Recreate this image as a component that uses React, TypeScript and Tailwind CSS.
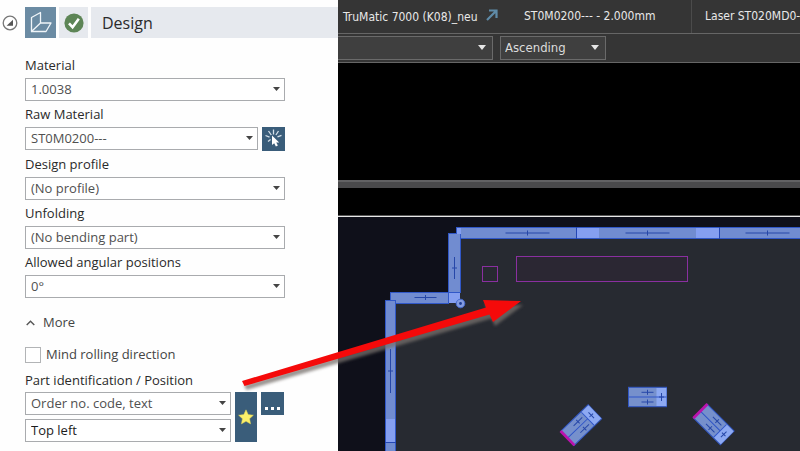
import type { ReactNode } from 'react';

const openSans = "font-['Open_Sans','Noto_Sans',sans-serif]";
const tahoma = "font-['DejaVu_Sans_Condensed','DejaVu_Sans',sans-serif]";

type PickerProps = {
  id: string;
  label?: string;
  value: string;
  strong?: boolean;
  ariaLabel?: string;
};

function Picker({ id, value, strong, ariaLabel }: PickerProps) {
  return (
    <div className="relative min-w-0 flex-1">
      <select
        id={id}
        aria-label={ariaLabel}
        className={`block h-[23px] w-full appearance-none rounded-none border border-[#a9abae] bg-white pb-0.5 pl-[5px] pr-5 text-[13px] leading-[20px] outline-none ${
          strong ? 'text-[#1c1c1c]' : 'text-[#505050]'
        }`}
      >
        <option>{value}</option>
      </select>
      <svg className="pointer-events-none absolute right-[5px] top-[9px] h-1 w-[7px]" viewBox="0 0 7 4" aria-hidden="true">
        <path d="M0 0h7L3.5 4z" fill="#444" />
      </svg>
    </div>
  );
}

function Field({ id, label, value, children }: PickerProps & { children?: ReactNode }) {
  return (
    <div>
      <label htmlFor={id} className="block h-[26px] text-[13px] leading-[26px] text-[#2a2a2a]">
        {label}
      </label>
      <div className="flex gap-1">
        <Picker id={id} value={value} />
        {children}
      </div>
    </div>
  );
}

function DesignPanel() {
  return (
    <aside className={`w-[338px] shrink-0 bg-[#fefefe] pt-[7px] ${openSans}`}>
      <header className="flex h-[31px] items-center">
        <button type="button" aria-label="Collapse" className="flex w-[25px] justify-start pl-0.5">
          <svg width="16" height="16" viewBox="0 0 16 16">
            <circle cx="8" cy="8" r="6.8" fill="#fff" stroke="#777" strokeWidth="1.3" />
            <path d="M11 4.8v6H4.6z" fill="#555" />
          </svg>
        </button>
        <button type="button" aria-label="Design view" className="flex h-[31px] w-[31px] items-center justify-center bg-[#6b8ba3]">
          <svg width="31" height="31" viewBox="0 0 31 31" fill="none" stroke="#f0f5f9" strokeWidth="1.3" strokeLinejoin="round">
            <path d="M6.5 10.5 15.5 5.500V16L6.500 24.500z" />
            <path d="M15.5 16H26L21 24.500H6.500" />
          </svg>
        </button>
        <div className="ml-[3px] flex h-[31px] w-[29px] items-center justify-center bg-[#e6e9ee]">
          <svg width="20" height="20" viewBox="0 0 20 20" role="img" aria-label="Valid">
            <circle cx="10" cy="10" r="9.6" fill="#5d8556" />
            <path d="m5 10.3 3.6 3.9 6.2-8.4" fill="none" stroke="#fff" strokeWidth="2.6" />
          </svg>
        </div>
        <h1 className="ml-[3px] flex h-[31px] flex-1 items-center bg-[#e6e9ee] pl-[11px] text-[16px] text-[#2b2b2b]">Design</h1>
      </header>

      <form className="pl-[25px] pt-[14px]">
        <div className="w-[260px]">
          <Field id="material" label="Material" value="1.0038" />
          <Field id="raw" label="Raw Material" value="ST0M0200---">
            <button type="button" aria-label="Pick raw material" className="h-6 w-[23px] bg-[#3a5d7a]">
              <svg width="23" height="24" viewBox="0 0 23 24" aria-hidden="true">
                <path
                  d="M11.5 2.5v5M6.5 4l2.8 4M16.5 4l-2.6 4M3.5 8.5l4 1.6M19.5 8.3l-4 1.6M6 14.5l2.6-2"
                  stroke="#d5e0e9"
                  strokeWidth="1.3"
                />
                <path d="M10 8.500v9.600l2.200-1.900 1.700 3.400 2-1-1.700-3.200h3z" fill="#fff" />
              </svg>
            </button>
          </Field>
          <Field id="profile" label="Design profile" value="(No profile)" />
          <Field id="unfolding" label="Unfolding" value="(No bending part)" />
          <Field id="angles" label="Allowed angular positions" value="0°" />
        </div>

        <button type="button" className="mt-[15px] flex h-5 items-center gap-2 text-[13px] text-[#444]">
          <svg width="9" height="6" viewBox="0 0 9 6" fill="none" stroke="#555" strokeWidth="1.4" className="ml-px">
            <path d="M.7 5 4.5 1.2 8.3 5" />
          </svg>
          More
        </button>

        <label className="mt-3 flex h-5 items-center gap-[5px] text-[13px] text-[#444]">
          <input type="checkbox" className="h-4 w-4 appearance-none border border-[#b2b4b6] bg-white" />
          Mind rolling direction
        </label>

        <label htmlFor="ident" className="mt-1 block h-[23px] text-[13px] leading-[23px] text-[#2a2a2a]">
          Part identification / Position
        </label>
        <div className="flex items-start gap-1">
          <div className="flex w-[206px] flex-col gap-1">
            <Picker id="ident" value="Order no. code, text" />
            <Picker id="position" value="Top left" ariaLabel="Position" strong />
          </div>
          <button type="button" aria-label="Favourite" className="flex h-[50px] w-[22px] items-center justify-center bg-[#3a5d7a]">
            <svg width="16" height="16" viewBox="0 0 16 16">
              <path d="m8 .8 2.200 4.800 5.200.6-3.800 3.500 1 5.200L8 12.300l-4.600 2.600 1-5.200L.6 6.200l5.200-.6z" fill="#fbf06a" stroke="#d9cf57" strokeWidth=".5" />
            </svg>
          </button>
          <button type="button" aria-label="More options" className="flex h-[23px] w-[23px] items-end justify-center gap-[3px] bg-[#3a5d7a] pb-[5px]">
            <span className="h-[3px] w-[3px] bg-white" />
            <span className="h-[3px] w-[3px] bg-white" />
            <span className="h-[3px] w-[3px] bg-white" />
          </button>
        </div>
      </form>
    </aside>
  );
}

function Bend({ x, y, half = 22, vertical = false }: { x: number; y: number; half?: number; vertical?: boolean }) {
  return (
    <path
      d={`M${-half} 0H${half}M0 -2.5V2.5`}
      transform={`translate(${x} ${y})${vertical ? ' rotate(90)' : ''}`}
      stroke="#2647a8"
      strokeWidth="1"
    />
  );
}

function Tab({ x, y, angle, edge }: { x: number; y: number; angle: number; edge?: boolean }) {
  return (
    <g transform={`translate(${x} ${y}) rotate(${angle})`}>
      <rect x="-19" y="-9.7" width="38" height="19.4" fill="#7690cc" stroke="#3157c4" />
      <rect x="9" y="-9" width="10" height="18" fill="#8da9f2" />
      <path d={edge ? 'M-19 0H9M9 -9V9' : 'M-19 0H19'} stroke="#2f55c8" />
      <Bend x={0} y={-4.7} half={6} />
      <Bend x={0} y={5} half={6} />
      <Bend x={14} y={0} half={4} vertical />
      {edge && <path d="M-19 -10V10" stroke="#bb12ad" strokeWidth="2.8" />}
    </g>
  );
}

function PartDrawing() {
  return (
    <svg className="min-h-0 flex-1 bg-[#0f101a]" viewBox="338 217 462 234" preserveAspectRatio="xMinYMin slice" role="img" aria-label="Part drawing">
      <path d="M390 451V298H455V233H800V451z" fill="#272a31" />
      <g fill="#718cd0" stroke="#3158c8">
        <rect x="456.5" y="227.5" width="350" height="11" />
        <rect x="448.5" y="233.5" width="12" height="59" />
        <rect x="390.5" y="292.5" width="58" height="11" />
        <rect x="385.5" y="300.5" width="10" height="160" />
      </g>
      <g fill="#859ff0">
        <rect x="577" y="228" width="22" height="10" />
        <rect x="696" y="228" width="23" height="10" />
        <rect x="449" y="293" width="11" height="10" />
        <rect x="386" y="419" width="9" height="23" />
        <rect x="457" y="228" width="4" height="6" />
      </g>
      <path d="M576.5 227V239M719.5 227V239M385 442.5H396" stroke="#2447b4" />
      <Bend x={527.5} y={233} />
      <Bend x={647.5} y={233} />
      <Bend x={767.5} y={233} />
      <Bend x={454.5} y={268} half={11} vertical />
      <Bend x={425.5} y={297.5} half={11} />
      <Bend x={390.5} y={371} vertical />
      <circle cx="460.5" cy="303.5" r="4.3" fill="#839be0" stroke="#4469cf" />
      <circle cx="460.5" cy="303.5" r="1.4" fill="#1e3c94" />
      <g fill="none" stroke="#8a2fa0">
        <rect x="482.5" y="266.5" width="15" height="15" />
        <rect x="516.5" y="256.5" width="171" height="25" fill="#2b2733" />
      </g>
      <Tab x={647.5} y={397} angle={0} />
      <Tab x={581.2} y={425} angle={-44} edge />
      <Tab x={713.8} y={424.5} angle={45} edge />
    </svg>
  );
}

function SortSelect({ label, value, className }: { label: string; value: string; className: string }) {
  return (
    <div className={`relative h-6 ${className}`}>
      <select
        aria-label={label}
        className="block h-6 w-full appearance-none rounded-none border border-[#6a6a6a] bg-[#3f3f3f] pl-1 pr-6 text-[13px] text-[#dcdcdc] outline-none"
      >
        <option>{value}</option>
      </select>
      <svg className="pointer-events-none absolute right-[7px] top-[9px] h-[5px] w-2" viewBox="0 0 8 5" aria-hidden="true">
        <path d="M0 0h8L4 5z" fill="#e6e6e6" />
      </svg>
    </div>
  );
}

function Workspace() {
  return (
    <main className={`flex min-w-0 flex-1 flex-col overflow-hidden bg-black ${tahoma}`}>
      <div className="flex h-[34px] items-stretch whitespace-nowrap border-b border-[#666] bg-[#353535] text-[12px] leading-[32px] text-[#e8e8e8]">
        <div className="flex w-[186px] shrink-0 items-center gap-2 pl-[5px]">
          <span>TruMatic 7000 (K08)_neu</span>
          <svg width="12" height="12" viewBox="0 0 12 12" fill="none" stroke="#5f8ba8" strokeWidth="2.2" className="-mt-1">
            <path d="M1 11 10 2M3 1.500h7.500V9" />
          </svg>
        </div>
        <div className="w-[168px] shrink-0 border-r border-[#4b4b4b]">ST0M0200--- - 2.000mm</div>
        <div className="min-w-0 flex-1 overflow-hidden pl-[13px]">Laser ST020MD0-</div>
      </div>
      <div className="flex h-[29px] items-center gap-[7px] border-b border-[#666] bg-[#353535]">
        <SortSelect label="Sort by" value="" className="-ml-px w-[156px]" />
        <SortSelect label="Sort order" value="Ascending" className="w-[106px]" />
      </div>
      <div className="h-[117px]" />
      <div className="h-2 border-t-2 border-[#626264] bg-[#4a4a4c]" />
      <div className="h-[27px]" />
      <div className="h-0.5 border-b border-[#e8e8e8] bg-[#555]" />
      <div className="flex flex-1 overflow-hidden">
        <PartDrawing />
      </div>
    </main>
  );
}

function PointerArrow() {
  return (
    <svg className="pointer-events-none absolute left-0 top-0" width="560" height="420" viewBox="0 0 560 420" aria-hidden="true">
      <defs>
        <filter id="soft" x="-10%" y="-20%" width="120%" height="150%">
          <feGaussianBlur stdDeviation="1.5" />
        </filter>
      </defs>
      <path
        d="M242 381 486 307.500 483 300 521 301 493 322 489.500 314.500 244.500 386z"
        transform="translate(2 4)"
        fill="#77716d"
        opacity=".75"
        filter="url(#soft)"
      />
      <path d="M242 381 486 307.500 483 300 521 301 493 322 489.500 314.500 244.500 386z" fill="#f50a0a" />
    </svg>
  );
}

export default function App() {
  return (
    <div className="relative flex min-h-screen overflow-hidden">
      <DesignPanel />
      <Workspace />
      <PointerArrow />
    </div>
  );
}
